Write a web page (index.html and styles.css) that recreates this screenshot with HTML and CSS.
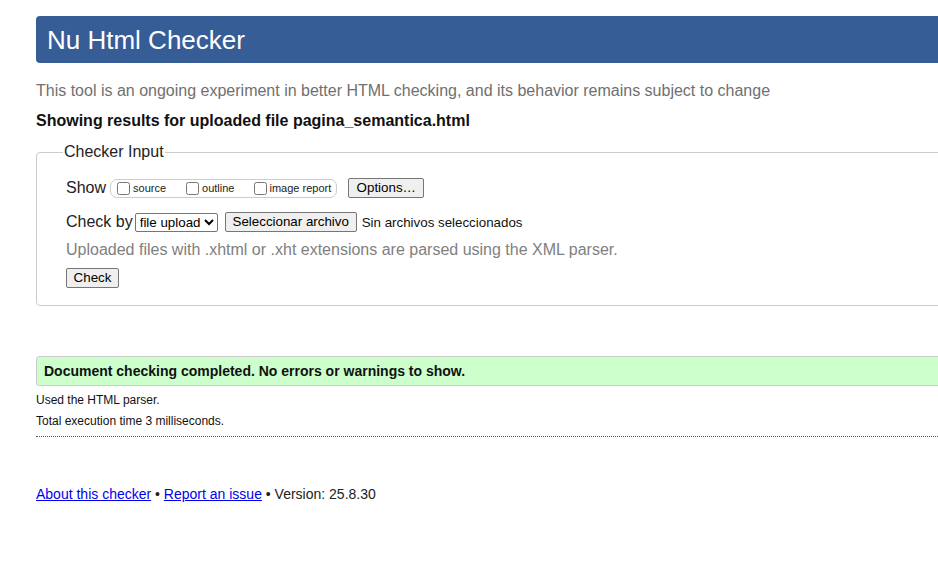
FILE: index.html
```html
<!DOCTYPE html>
<html lang="en">
<head>
<meta charset="utf-8">
<title>Nu Html Checker</title>
<link rel="stylesheet" href="styles.css">
</head>
<body>
<div class="page">
  <h1 class="masthead">Nu Html Checker</h1>
  <p class="intro">This tool is an ongoing experiment in better HTML checking, and its behavior remains subject to change</p>
  <p class="showing">Showing results for uploaded file pagina_semantica.html</p>
  <fieldset class="checker">
    <legend class="legend">Checker Input</legend>
    <div class="row">
      <span class="row-label">Show</span>
      <span class="show-box">
        <label class="opt"><input type="checkbox" class="cb">source</label>
        <label class="opt"><input type="checkbox" class="cb">outline</label>
        <label class="opt opt-last"><input type="checkbox" class="cb cb-tight">image report</label>
      </span>
      <button type="button" class="btn btn-options">Options…</button>
    </div>
    <div class="row row-2">
      <span class="row-label">Check by</span>
      <select class="select"><option>file upload</option></select>
      <button type="button" class="btn btn-file">Seleccionar archivo</button>
      <span class="file-status">Sin archivos seleccionados</span>
    </div>
    <p class="hint">Uploaded files with .xhtml or .xht extensions are parsed using the XML parser.</p>
    <button type="button" class="btn btn-check">Check</button>
  </fieldset>
  <div class="success">Document checking completed. No errors or warnings to show.</div>
  <p class="meta">Used the HTML parser.</p>
  <p class="meta meta-last">Total execution time 3 milliseconds.</p>
  <p class="footer"><a href="#">About this checker</a> • <a href="#">Report an issue</a> • Version: 25.8.30</p>
</div>
</body>
</html>
```
FILE: styles.css
```css
html {
  overflow: hidden;
}
body {
  margin: 0;
  background: #fff;
  font-family: "Liberation Sans", Arial, sans-serif;
  color: #222;
}
.page {
  margin-left: 36px;
  width: 1000px;
  padding-top: 16px;
}
.masthead {
  margin: 0;
  height: 46px;
  line-height: 46px;
  padding: 1px 0 0 11px;
  background: #365d95;
  color: #fff;
  font-size: 26px;
  font-weight: normal;
  border-radius: 4px;
}
.intro {
  margin: 19px 0 0;
  font-size: 16px;
  line-height: 18px;
  color: #707070;
}
.showing {
  margin: 12px 0 0;
  font-size: 16px;
  line-height: 18px;
  font-weight: bold;
  color: #111;
}
.checker {
  margin: 13px 0 0;
  padding: 17px 28px 17px 29px;
  border: 1px solid #ccc;
  border-radius: 4px;
  min-inline-size: 0;
}
.legend {
  padding: 0 1px;
  margin-left: -3px;
  font-size: 16px;
  line-height: 18px;
  color: #222;
}
.row {
  display: flex;
  align-items: center;
  height: 20px;
}
.row-2 {
  margin-top: 14px;
}
.row-label {
  font-size: 16px;
  color: #222;
  margin-right: 4px;
}
.show-box {
  display: inline-flex;
  align-items: center;
  height: 17px;
  border: 1px solid #ccc;
  border-radius: 7px;
  padding: 0 5px 0 2px;
  margin-right: 11px;
}
.opt {
  display: inline-flex;
  align-items: center;
  font-size: 11px;
  color: #222;
  margin-right: 16px;
}
.opt-last {
  margin-right: 0;
}
.cb {
  width: 13px;
  height: 13px;
  margin: 0 3px 0 4px;
}
.cb-tight {
  margin-right: 2px;
}
.btn {
  font-family: "Liberation Sans", Arial, sans-serif;
  font-size: 13.33px;
  color: #000;
  background: #efefef;
  border: 1px solid #767676;
  border-radius: 2px;
  height: 20px;
  padding: 0 6px;
  line-height: 16px;
}
.btn-options {
  width: 76px;
}
.select {
  font-family: "Liberation Sans", Arial, sans-serif;
  font-size: 13.33px;
  width: 83px;
  height: 19px;
  margin-left: -2px;
  margin-right: 7px;
  border: 1px solid #767676;
  border-radius: 2px;
  background: #fff;
  color: #000;
  padding: 0;
}
.btn-file {
  width: 132px;
}
.file-status {
  font-size: 13.33px;
  color: #111;
  margin-left: 5px;
}
.hint {
  margin: 9px 0 0;
  font-size: 16px;
  line-height: 18px;
  color: #808080;
}
.btn-check {
  margin-top: 9px;
  width: 53px;
  display: block;
}
.success {
  margin-top: 50px;
  height: 28px;
  line-height: 28px;
  border: 1px solid #ccc;
  border-radius: 3px;
  background: #ccffcc;
  padding-left: 7px;
  font-size: 14px;
  font-weight: bold;
  color: #111;
}
.meta {
  margin: 7px 0 0;
  font-size: 12px;
  line-height: 14px;
  color: #111;
}
.meta-last {
  padding-bottom: 8px;
  border-bottom: 1px dotted #555;
}
.footer {
  margin: 49px 0 0;
  font-size: 14px;
  line-height: 16px;
  color: #222;
}
.footer a {
  color: #0000ee;
}
```
